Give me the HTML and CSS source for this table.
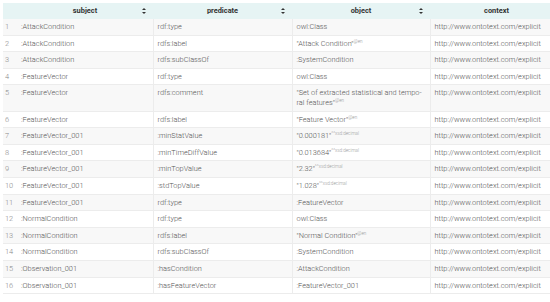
FILE: index.html
```html
<!DOCTYPE html>
<html lang="en">
<head>
    <meta charset="UTF-8">
    <title>Query results</title>
    <link rel="stylesheet" href="styles.css">
</head>
<body>

<div class="results">
    <table class="triples">
        <colgroup>
            <col class="col-idx">
            <col class="col-subject">
            <col class="col-predicate">
            <col class="col-object">
            <col class="col-context">
        </colgroup>
        <thead>
            <tr>
                <th></th>
                <th>subject <span class="sort"></span></th>
                <th>predicate <span class="sort"></span></th>
                <th>object <span class="sort"></span></th>
                <th>context</th>
            </tr>
        </thead>
        <tbody>
            <tr><td class="idx">1</td><td>:AttackCondition</td><td>rdf:type</td><td>owl:Class</td><td>http://www.ontotext.com/explicit</td></tr>
            <tr><td class="idx">2</td><td>:AttackCondition</td><td>rdfs:label</td><td>"Attack Condition"<sup>@en</sup></td><td>http://www.ontotext.com/explicit</td></tr>
            <tr><td class="idx">3</td><td>:AttackCondition</td><td>rdfs:subClassOf</td><td>:SystemCondition</td><td>http://www.ontotext.com/explicit</td></tr>
            <tr><td class="idx">4</td><td>:FeatureVector</td><td>rdf:type</td><td>owl:Class</td><td>http://www.ontotext.com/explicit</td></tr>
            <tr><td class="idx">5</td><td>:FeatureVector</td><td>rdfs:comment</td><td>"Set of extracted statistical and tempo-<br>ral features"<sup>@en</sup></td><td>http://www.ontotext.com/explicit</td></tr>
            <tr><td class="idx">6</td><td>:FeatureVector</td><td>rdfs:label</td><td>"Feature Vector"<sup>@en</sup></td><td>http://www.ontotext.com/explicit</td></tr>
            <tr><td class="idx">7</td><td>:FeatureVector_001</td><td>:minStatValue</td><td>"0.000181"<sup>^^xsd:decimal</sup></td><td>http://www.ontotext.com/explicit</td></tr>
            <tr><td class="idx">8</td><td>:FeatureVector_001</td><td>:minTimeDiffValue</td><td>"0.013684"<sup>^^xsd:decimal</sup></td><td>http://www.ontotext.com/explicit</td></tr>
            <tr><td class="idx">9</td><td>:FeatureVector_001</td><td>:minTopValue</td><td>"2.32"<sup>^^xsd:decimal</sup></td><td>http://www.ontotext.com/explicit</td></tr>
            <tr><td class="idx">10</td><td>:FeatureVector_001</td><td>:stdTopValue</td><td>"1.028"<sup>^^xsd:decimal</sup></td><td>http://www.ontotext.com/explicit</td></tr>
            <tr><td class="idx">11</td><td>:FeatureVector_001</td><td>rdf:type</td><td>:FeatureVector</td><td>http://www.ontotext.com/explicit</td></tr>
            <tr><td class="idx">12</td><td>:NormalCondition</td><td>rdf:type</td><td>owl:Class</td><td>http://www.ontotext.com/explicit</td></tr>
            <tr><td class="idx">13</td><td>:NormalCondition</td><td>rdfs:label</td><td>"Normal Condition"<sup>@en</sup></td><td>http://www.ontotext.com/explicit</td></tr>
            <tr><td class="idx">14</td><td>:NormalCondition</td><td>rdfs:subClassOf</td><td>:SystemCondition</td><td>http://www.ontotext.com/explicit</td></tr>
            <tr><td class="idx">15</td><td>:Observation_001</td><td>:hasCondition</td><td>:AttackCondition</td><td>http://www.ontotext.com/explicit</td></tr>
            <tr><td class="idx">16</td><td>:Observation_001</td><td>:hasFeatureVector</td><td>:FeatureVector_001</td><td>http://www.ontotext.com/explicit</td></tr>
        </tbody>
    </table>
</div>

</body>
</html>
```

FILE: styles.css
```css
* {
    box-sizing: border-box;
}

body {
    margin: 0;
    padding: 3px 0 0 3px;
    background: #fff;
    overflow: hidden;
    font-family: Roboto, "Liberation Sans", sans-serif;
}

.results {
    width: 560px;
}

.triples {
    width: 560px;
    table-layout: fixed;
    border-collapse: collapse;
    font-size: 7.4px;
    font-weight: 300;
    line-height: 9.6px;
    color: #555;
}

.col-idx { width: 14px; }
.col-subject { width: 136px; }
.col-predicate { width: 139px; }
.col-object { width: 138px; }
.col-context { width: 133px; }

.triples th {
    position: relative;
    background: #e6f4f4;
    color: #333;
    font-weight: 700;
    height: 16px;
    padding: 0 4px;
    text-align: center;
    white-space: nowrap;
}

.sort {
    position: absolute;
    right: 7px;
    top: 5px;
    width: 4px;
    height: 6px;
}

.sort::before,
.sort::after {
    content: "";
    position: absolute;
    left: 0;
    border-left: 2px solid transparent;
    border-right: 2px solid transparent;
}

.sort::before {
    top: 0;
    border-bottom: 2.5px solid #333;
}

.sort::after {
    bottom: 0;
    border-top: 2.5px solid #333;
}

.triples td {
    padding: 3px 4px 3px 4px;
    border-bottom: 1px solid #ececec;
    border-left: 1px solid #ececec;
    white-space: nowrap;
    overflow: hidden;
    vertical-align: top;
}

.triples td.idx {
    border-left: none;
    padding: 3px 2px;
    color: #888;
}

.triples td.idx + td {
    border-left: none;
}

.triples tbody tr:nth-child(odd) {
    background: #f8f8f8;
}

.triples sup {
    font-size: 4.6px;
    line-height: 0;
    vertical-align: 3px;
    color: #999;
}
```
